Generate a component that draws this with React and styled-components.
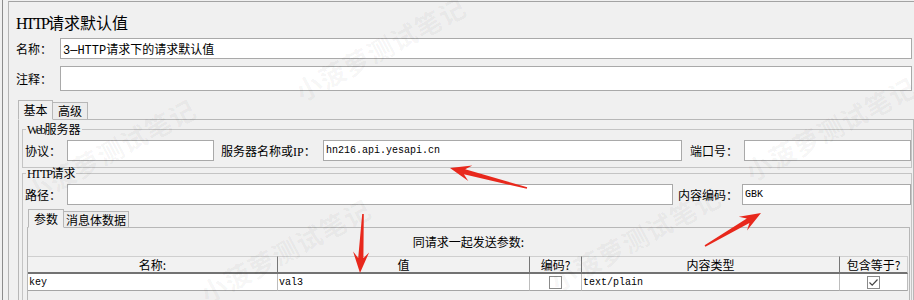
import React from 'react';
import styled, { createGlobalStyle } from 'styled-components';

const Global = createGlobalStyle`
  html, body { margin: 0; padding: 0; background: #f0f0f0; }
  body {
    font-family: "Noto Sans CJK SC", "Liberation Sans", sans-serif;
    font-size: 12px;
    color: #000;
    overflow: hidden;
  }
`;

const Page = styled.div`
  position: relative;
  width: 914px;
  height: 300px;
  overflow: hidden;
  display: flex;
  align-items: flex-start;
  background: #f0f0f0;
`;

const Splitter = styled.div`
  flex: none;
  box-sizing: border-box;
  width: 6px;
  height: 300px;
  margin-left: 2px;
  border-left: 1px solid #8c8c8c;
`;

const Main = styled.div`
  flex: 1;
  min-width: 0;
  margin-top: 1px;
  border-top: 1px solid #a3a3a3;
  border-left: 1px solid #b4b4b4;
  padding: 0 2px 0 7px;
  display: flex;
  flex-direction: column;
`;

const Title = styled.div`
  flex: none;
  height: 22px;
  font-size: 16px;
  line-height: 22px;
  margin: 9px 0 5px;
  white-space: nowrap;
  overflow: visible;
`;

const Latin = styled.span`
  font-family: "Liberation Serif", serif;
  font-size: ${(p) => p.$size || 12}px;
  letter-spacing: ${(p) => p.$ls || 0}px;
  line-height: 1;
`;

const FieldRow = styled.div`
  flex: none;
  display: flex;
  align-items: center;
  height: ${(p) => p.$h}px;
  margin-bottom: ${(p) => p.$mb || 0}px;
`;

const Label = styled.label`
  flex: none;
  width: ${(p) => p.$w}px;
  margin-left: ${(p) => p.$ml || 0}px;
  white-space: nowrap;
  line-height: 14px;
`;

const Field = styled.input`
  flex: ${(p) => (p.$w ? 'none' : '1')};
  width: ${(p) => (p.$w ? `${p.$w}px` : 'auto')};
  min-width: 0;
  height: 100%;
  box-sizing: border-box;
  margin: 0;
  border: 1px solid #a9a9a9;
  border-radius: 0;
  background: #fff;
  padding: 0 2px;
  font-family: ${(p) => (p.$cjk ? '"Liberation Mono", "Noto Sans CJK SC", monospace' : '"Liberation Mono", monospace')};
  font-size: ${(p) => (p.$cjk ? 12 : 10)}px;
  color: #000;
  outline: none;
`;

const TabStrip = styled.div`
  flex: none;
  display: flex;
  align-items: flex-end;
  height: ${(p) => p.$h}px;
  margin: ${(p) => p.$mt || 0}px 0 -1px ${(p) => p.$ml}px;
  position: relative;
  z-index: 1;
`;

const Tab = styled.div`
  box-sizing: border-box;
  width: ${(p) => p.$w}px;
  height: ${(p) => (p.$active ? '100%' : 'calc(100% - 2px)')};
  border: 1px solid #b7b7b7;
  border-bottom: 1px solid ${(p) => (p.$active ? '#f0f0f0' : '#b7b7b7')};
  border-left-width: ${(p) => (p.$first ? 1 : 0)}px;
  background: ${(p) => (p.$active ? '#f0f0f0' : '#ececec')};
  display: flex;
  align-items: center;
  justify-content: center;
  white-space: nowrap;
  line-height: 14px;
`;

const Pane = styled.div`
  flex: none;
  height: 260px;
  border: 1px solid #b7b7b7;
  margin: 0 -2px 0 2px;
  padding: 3px 1px 0 3px;
  display: flex;
  flex-direction: column;
`;

const Group = styled.fieldset`
  flex: none;
  margin: ${(p) => p.$mt || 0}px 0 0 0;
  padding: 5px 0 6px 2px;
  border: 1px solid #c4c4c4;
  min-width: 0;
`;

const Legend = styled.legend`
  height: 12px;
  padding: 0 1px;
  margin-left: 1px;
  line-height: 12px;
  font-size: 12px;
  white-space: nowrap;
`;

const InnerBlock = styled.div`
  margin: 4px 1px 0 2px;
`;

const InnerPane = styled.div`
  border: 1px solid #b7b7b7;
  height: 140px;
`;

const Caption = styled.div`
  height: 14px;
  text-align: center;
  padding-top: 7px;
  line-height: 14px;
`;

const Table = styled.div`
  margin-top: 7px;
  display: grid;
  grid-template-columns: 250px 252px 52px 258px 68px;
`;

const HeadCell = styled.div`
  box-sizing: border-box;
  height: 18px;
  border-top: 1px solid #cfcfcf;
  border-right: 1px solid ${(p) => (p.$last ? '#cfcfcf' : '#777')};
  border-bottom: 2px solid #727272;
  background: #f2f2f2;
  display: flex;
  align-items: center;
  justify-content: center;
  line-height: 14px;
  white-space: nowrap;
`;

const Cell = styled.div`
  box-sizing: border-box;
  height: 17px;
  border-right: 1px solid #bdbdbd;
  border-bottom: 1px solid #a5a5a5;
  background: #fff;
  display: flex;
  align-items: center;
  justify-content: ${(p) => (p.$center ? 'center' : 'flex-start')};
  padding-left: ${(p) => (p.$center ? 0 : 1)}px;
  font-family: "Liberation Mono", monospace;
  font-size: 10px;
`;

const Box = styled.span`
  box-sizing: border-box;
  width: 13px;
  height: 13px;
  border: 1px solid #8a8a8a;
  background: #fff;
  display: flex;
  align-items: center;
  justify-content: center;
`;

const Overlay = styled.div`
  position: absolute;
  inset: 0;
  pointer-events: none;
  overflow: hidden;
`;

const Mark = styled.span`
  position: absolute;
  left: ${(p) => p.$x}px;
  top: ${(p) => p.$y}px;
  transform: translate(-50%, -50%) rotate(-28deg);
  font-family: "Noto Sans CJK SC", sans-serif;
  font-weight: 700;
  font-size: 26px;
  letter-spacing: 1px;
  color: rgba(0, 0, 0, 0.045);
  white-space: nowrap;
`;

const ArrowLayer = styled.svg`
  position: absolute;
  left: 0;
  top: 0;
`;

function arrowPoints([tx, ty], [px, py]) {
  const dx = px - tx;
  const dy = py - ty;
  const L = Math.hypot(dx, dy);
  const ux = dx / L;
  const uy = dy / L;
  const nx = -uy;
  const ny = ux;
  const pt = (a, b) => `${(tx + ux * a + nx * b).toFixed(1)},${(ty + uy * a + ny * b).toFixed(1)}`;
  return [
    pt(0, 0.8),
    pt(L - 15, 2.6),
    pt(L - 21, 8),
    pt(L, 0),
    pt(L - 21, -8),
    pt(L - 15, -2.6),
    pt(0, -0.8),
  ].join(' ');
}

const arrows = [
  [[527, 188], [450, 168]],
  [[363, 214], [360, 273]],
  [[705, 246], [761, 213]],
];

const marks = [
  { x: 380, y: 48 },
  { x: 830, y: 128 },
  { x: 110, y: 150 },
  { x: 285, y: 250 },
  { x: 635, y: 238 },
];

function Check({ checked }) {
  return (
    <Box>
      {checked && (
        <svg width="11" height="11" viewBox="0 0 11 11">
          <path d="M1.5 5.5 L4.2 8.2 L9.5 2.5" fill="none" stroke="#444" strokeWidth="1.2" />
        </svg>
      )}
    </Box>
  );
}

export default function App() {
  return (
    <>
      <Global />
      <Page>
        <Splitter />
        <Main>
          <Title>
            <Latin $size={16} $ls={-2}>HTTP</Latin>请求默认值
          </Title>
          <FieldRow $h={21} $mb={7}>
            <Label $w={44}>名称：</Label>
            <Field $cjk readOnly defaultValue="3—HTTP请求下的请求默认值" />
          </FieldRow>
          <FieldRow $h={25}>
            <Label $w={44}>注释：</Label>
            <Field readOnly defaultValue="" />
          </FieldRow>

          <TabStrip $h={20} $ml={2} $mt={9}>
            <Tab $w={35} $active $first>基本</Tab>
            <Tab $w={35}>高级</Tab>
          </TabStrip>
          <Pane>
            <Group>
              <Legend>
                <Latin $ls={-1.4}>Web</Latin>服务器
              </Legend>
              <FieldRow $h={21}>
                <Label $w={42}>协议：</Label>
                <Field $w={147} readOnly defaultValue="" />
                <Label $w={102} $ml={7}>
                  服务器名称或<Latin>IP</Latin>：
                </Label>
                <Field readOnly defaultValue="hn216.api.yesapi.cn" />
                <Label $w={54} $ml={8}>端口号：</Label>
                <Field $w={167} readOnly defaultValue="" />
              </FieldRow>
            </Group>
            <Group $mt={-1}>
              <Legend>
                <Latin $ls={-1.4}>HTTP</Latin>请求
              </Legend>
              <FieldRow $h={21}>
                <Label $w={42}>路径：</Label>
                <Field readOnly defaultValue="" />
                <Label $w={64} $ml={5}>内容编码：</Label>
                <Field $w={169} readOnly defaultValue="GBK" />
              </FieldRow>
              <InnerBlock>
                <TabStrip $h={19} $ml={1}>
                  <Tab $w={36} $active $first>参数</Tab>
                  <Tab $w={65}>消息体数据</Tab>
                </TabStrip>
                <InnerPane>
                  <Caption>同请求一起发送参数:</Caption>
                  <Table>
                    <HeadCell>名称:</HeadCell>
                    <HeadCell>值</HeadCell>
                    <HeadCell>编码?</HeadCell>
                    <HeadCell>内容类型</HeadCell>
                    <HeadCell $last>包含等于?</HeadCell>
                    <Cell>key</Cell>
                    <Cell>val3</Cell>
                    <Cell $center>
                      <Check />
                    </Cell>
                    <Cell>text/plain</Cell>
                    <Cell $center>
                      <Check checked />
                    </Cell>
                  </Table>
                </InnerPane>
              </InnerBlock>
            </Group>
          </Pane>
        </Main>

        <Overlay>
          {marks.map((m, i) => (
            <Mark key={i} $x={m.x} $y={m.y}>小菠萝测试笔记</Mark>
          ))}
          <ArrowLayer width="914" height="300" viewBox="0 0 914 300">
            {arrows.map(([t, p], i) => (
              <polygon key={i} points={arrowPoints(t, p)} fill="#e8281c" />
            ))}
          </ArrowLayer>
        </Overlay>
      </Page>
    </>
  );
}
